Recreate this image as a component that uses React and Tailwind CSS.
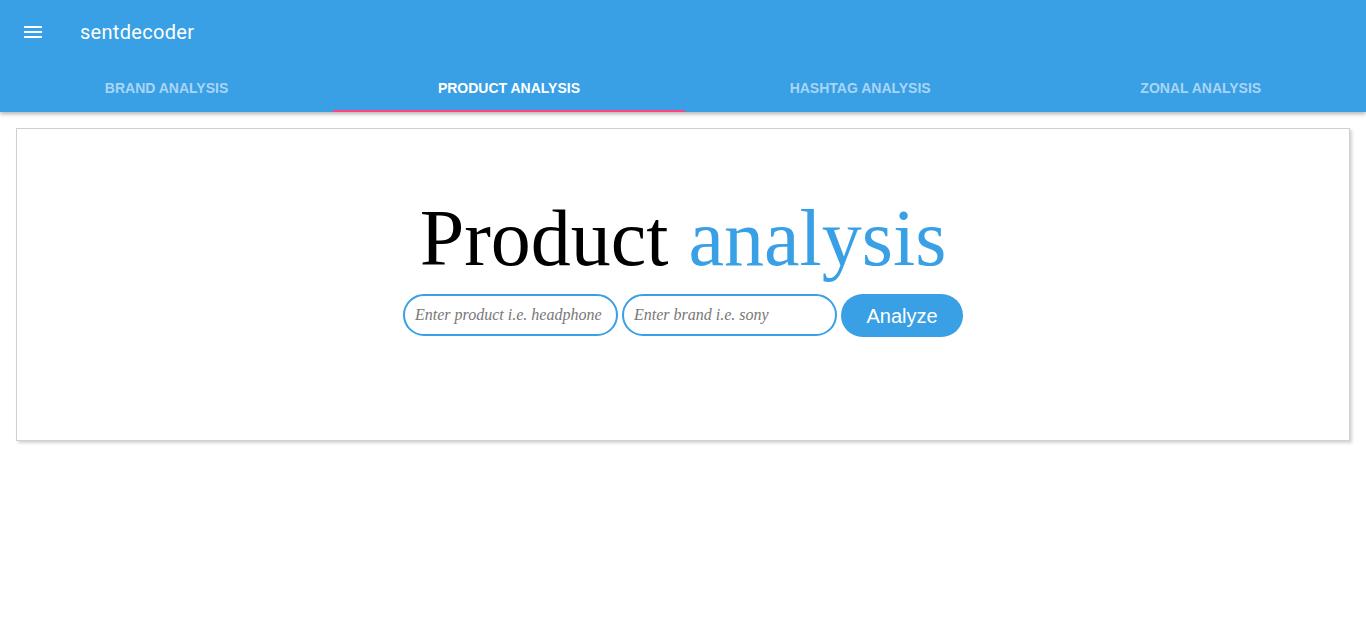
import { useState } from "react";

const tabs = ["Brand Analysis", "Product Analysis", "Hashtag Analysis", "Zonal Analysis"];

export default function App() {
  const [active, setActive] = useState(1);

  return (
    <div className="min-h-screen bg-white font-['Liberation_Sans',Arial,sans-serif]">
      {/* Top app bar */}
      <header className="bg-[#39a0e5] shadow-[0_2px_4px_rgba(0,0,0,0.3)] relative z-10">
        <div className="h-16 flex items-center">
          <button className="ml-[21px] w-6 h-6 flex items-center justify-center text-white">
            <svg width="24" height="24" viewBox="0 0 24 24" fill="currentColor">
              <path d="M3 18h18v-2H3v2zm0-5h18v-2H3v2zm0-7v2h18V6H3z" />
            </svg>
          </button>
          <span className="ml-[35px] text-white text-[20px] font-['Roboto',sans-serif] tracking-[0.3px]">
            sentdecoder
          </span>
        </div>
        <nav className="flex h-12">
          {tabs.map((t, i) => (
            <button
              key={t}
              onClick={() => setActive(i)}
              className={
                "flex-auto h-12 flex items-center justify-center text-[14px] font-bold uppercase border-b-2 " +
                (i === active
                  ? "text-white border-[#ff4081]"
                  : "text-[#a9d5f5] border-transparent")
              }
            >
              <span className="pt-[2px]">{t}</span>
            </button>
          ))}
        </nav>
      </header>

      {/* Card */}
      <main className="px-4 pt-4">
        <div className="border border-[#d0d0d0] shadow-[2px_2px_3px_rgba(0,0,0,0.18)] bg-white h-[313px] flex flex-col items-center pt-[65px]">
          <h1 className="font-['Liberation_Serif',serif] text-[80px] leading-[88px] text-black">
            Product <span className="text-[#39a0e5]">analysis</span>
          </h1>
          <div className="mt-[12px] flex items-start gap-1">
            <input
              placeholder="Enter product i.e. headphone"
              className="w-[215px] h-[42px] rounded-full border-2 border-[#39a0e5] px-[10px] outline-none font-['Liberation_Serif',serif] italic text-[16px] text-[#444] placeholder:text-[#777]"
            />
            <input
              placeholder="Enter brand i.e. sony"
              className="w-[215px] h-[42px] rounded-full border-2 border-[#39a0e5] px-[10px] outline-none font-['Liberation_Serif',serif] italic text-[16px] text-[#444] placeholder:text-[#777]"
            />
            <button className="w-[122px] h-[43px] rounded-full bg-[#39a0e5] text-white text-[20px]">
              Analyze
            </button>
          </div>
        </div>
      </main>
    </div>
  );
}
